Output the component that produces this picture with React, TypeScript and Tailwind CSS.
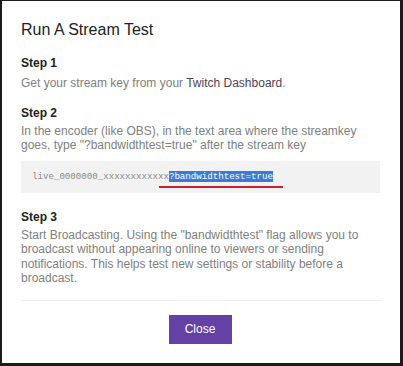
import React from 'react';

const sans = { fontFamily: '"Liberation Sans", Arial, sans-serif' };

function StepLabel({ children }: { children: React.ReactNode }) {
  return <div className="text-[12px] leading-[16px] font-bold text-[#222]">{children}</div>;
}

export default function App() {
  return (
    <div
      style={sans}
      className="w-[403px] h-[366px] bg-white border-t border-l-2 border-r-[3px] border-b-[3px] border-[#1c1c1c] flex flex-col pl-[19px] pr-[20px] pt-[19px]"
    >
      <h1 className="text-[16px] leading-[20px] text-[#222]">Run A Stream Test</h1>

      <div className="mt-[15px]">
        <StepLabel>Step 1</StepLabel>
        <p className="mt-[5px] text-[12px] leading-[14.5px] text-[#808080]">
          Get your stream key from your <span className="text-[#4b4459]">Twitch Dashboard</span>.
        </p>
      </div>

      <div className="mt-[14px]">
        <StepLabel>Step 2</StepLabel>
        <p className="mt-[3px] text-[12px] leading-[14.5px] text-[#808080]">
          In the encoder (like OBS), in the text area where the streamkey goes, type "?bandwidthtest=true" after the stream key
        </p>
        <div className="mt-[8px] h-[32px] bg-[#f2f2f2] flex items-center pl-[11px]">
          <code
            style={{ fontFamily: '"Liberation Mono", "Courier New", monospace' }}
            className="text-[9.15px] leading-[11px] text-[#8a8a8a] whitespace-pre"
          >
            live_0000000_xxxxxxxxxxxx
            <span className="relative inline-block bg-[#3b7bd4] text-white">
              ?bandwidthtest=true
              <span className="absolute left-[-10px] right-[-10px] top-[15px] h-[2px] bg-[#c9202b]" />
            </span>
          </code>
        </div>
      </div>

      <div className="mt-[16px]">
        <StepLabel>Step 3</StepLabel>
        <p className="mt-[3px] text-[12px] leading-[14.5px] text-[#808080]">
          Start Broadcasting. Using the "bandwidthtest" flag allows you to broadcast without appearing online to viewers or sending notifications. This helps test new settings or stability before a broadcast.
        </p>
      </div>

      <div className="mt-[14px] h-px bg-[#efefef] mr-[-2px]" />

      <div className="mt-[14px] flex justify-center">
        <button className="ml-[-1px] w-[63px] h-[29px] bg-[#6441a4] text-white text-[12px]">Close</button>
      </div>
    </div>
  );
}
